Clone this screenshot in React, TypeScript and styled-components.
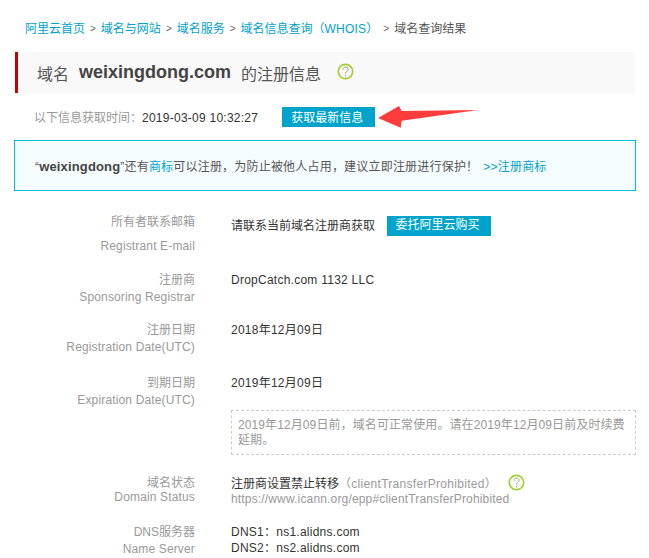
import styled, { createGlobalStyle } from 'styled-components';

const GlobalStyle = createGlobalStyle`
  html, body {
    margin: 0;
    padding: 0;
    background: #fff;
    overflow: hidden;
  }
  body {
    font-family: "Liberation Sans", "Noto Sans CJK SC", sans-serif;
    font-size: 12px;
    color: #333;
  }
`;

const Page = styled.div`
  width: 649px;
  height: 558px;
  overflow: hidden;
  padding: 21px 14px 0 14px;
  box-sizing: border-box;
`;

const Breadcrumb = styled.div`
  display: flex;
  align-items: center;
  height: 16px;
  padding-left: 11px;
  font-size: 12px;
  line-height: 16px;
  color: #555;
`;

const Crumb = styled.a`
  color: #00a2ca;
`;

const Whois = styled.span`
  letter-spacing: 0.2px;
`;

const Sep = styled.span`
  color: #666;
  margin: 0 5px;
  font-size: 10px;
`;

const TitleBar = styled.div`
  display: flex;
  align-items: center;
  height: 41px;
  margin: 15px 0 0 1px;
  padding-left: 19px;
  background: #f9f9f9;
  border-left: 3px solid #c40000;
  font-size: 16px;
  color: #555;
`;

const DomainName = styled.b`
  font-size: 18px;
  color: #444;
  margin: 0 10px;
`;

const Help = styled.svg<{ $gap: number }>`
  width: 17px;
  height: 17px;
  margin: -3px 0 0 ${p => p.$gap}px;
  flex: none;
`;

const FetchRow = styled.div`
  display: flex;
  align-items: center;
  height: 20px;
  margin-top: 14px;
  padding-left: 20px;
  color: #999;
`;

const FetchText = styled.span`
  margin-bottom: 2px;
`;

const FetchTime = styled.span`
  color: #333;
  letter-spacing: 0.25px;
`;

const FillButton = styled.button<{ $width: number; $left: number }>`
  width: ${p => p.$width}px;
  height: 20px;
  margin-left: ${p => p.$left}px;
  padding: 0 3px 2px 0;
  border: 0;
  background: #00a4ca;
  color: #fff;
  font: inherit;
  font-size: 12px;
  flex: none;
`;

const ArrowMark = styled.svg`
  width: 102px;
  height: 28px;
  margin-left: 2px;
  flex: none;
`;

const Notice = styled.div`
  display: flex;
  align-items: center;
  height: 51px;
  margin-top: 13px;
  padding-left: 20px;
  box-sizing: border-box;
  width: 622px;
  background: #f5fcff;
  border: 1px solid #00bfd8;
  color: #555;
  letter-spacing: 0.2px;
`;

const NoticeName = styled.b`
  font-size: 13px;
  letter-spacing: 0.15px;
  color: #444;
`;

const NoticeLink = styled.a<{ $left?: number }>`
  color: #00a2ca;
  margin-left: ${p => p.$left ?? 0}px;
`;

const Rows = styled.div`
  margin-top: 23px;
`;

const Row = styled.div<{ $height: number }>`
  display: grid;
  grid-template-columns: 181px 1fr;
  column-gap: 36px;
  height: ${p => p.$height}px;
`;

const Label = styled.div<{ $gap: number; $line?: number }>`
  display: flex;
  flex-direction: column;
  align-items: flex-end;
  gap: ${p => p.$gap}px;
  color: #999;
  line-height: ${p => p.$line ?? 16}px;
`;

const LabelEn = styled.span`
  letter-spacing: 0.15px;
`;

const Value = styled.div`
  line-height: 16px;
  color: #333;
  letter-spacing: 0.25px;
`;

const ValueLine = styled.div<{ $top?: number; $line?: number }>`
  display: flex;
  align-items: center;
  padding-top: ${p => p.$top ?? 0}px;
  height: ${p => p.$line ?? 15}px;
  letter-spacing: 0;
`;

const Muted = styled.span`
  color: #999;
  letter-spacing: 0.3px;
`;

const StatusLink = styled.span`
  color: #999;
  letter-spacing: 0.16px;
`;

const DashedNote = styled.div`
  box-sizing: border-box;
  width: 405px;
  height: 45px;
  margin: 0 0 21px 217px;
  padding: 7px 6px;
  border: 1px dashed #ccc;
  color: #999;
  line-height: 15px;
  letter-spacing: 0.1px;
`;

const HelpIcon = ({ gap }: { gap: number }) => (
  <Help $gap={gap} viewBox="0 0 17 17">
    <circle cx="8.5" cy="8.5" r="7.2" fill="none" stroke="#a6ce39" strokeWidth="1.7" />
    <path
      d="M6 6.6c0-1.6 1.1-2.5 2.6-2.5s2.5.9 2.5 2.2c0 1-.5 1.5-1.3 2.1-.8.6-1.2 1.1-1.2 2v.5"
      fill="none"
      stroke="#9aa86a"
      strokeWidth="1"
    />
    <circle cx="8.6" cy="12.8" r=".7" fill="#9aa86a" />
  </Help>
);

const Arrow = () => (
  <ArrowMark viewBox="0 0 102 28">
    <path d="M1 15 L22 3 L24.7 8 L101 7 L24.7 17.7 L23.7 24.7 Z" fill="#fd3c3c" />
  </ArrowMark>
);

export default function App() {
  return (
    <Page>
      <GlobalStyle />
      <Breadcrumb>
        <Crumb>阿里云首页</Crumb>
        <Sep>&gt;</Sep>
        <Crumb>域名与网站</Crumb>
        <Sep>&gt;</Sep>
        <Crumb>域名服务</Crumb>
        <Sep>&gt;</Sep>
        <Crumb>域名信息查询（<Whois>WHOIS</Whois>）</Crumb>
        <Sep>&gt;</Sep>
        <span>域名查询结果</span>
      </Breadcrumb>

      <TitleBar>
        域名
        <DomainName>weixingdong.com</DomainName>
        的注册信息
        <HelpIcon gap={16} />
      </TitleBar>

      <FetchRow>
        <FetchText>以下信息获取时间：<FetchTime>2019-03-09 10:32:27</FetchTime></FetchText>
        <FillButton $width={93} $left={24}>获取最新信息</FillButton>
        <Arrow />
      </FetchRow>

      <Notice>
        <span>“<NoticeName>weixingdong</NoticeName>”还有<NoticeLink>商标</NoticeLink>可以注册，为防止被他人占用，建议立即注册进行保护！</span>
        <NoticeLink $left={5}>&gt;&gt;注册商标</NoticeLink>
      </Notice>

      <Rows>
        <Row $height={58}>
          <Label $gap={8}>
            <span>所有者联系邮箱</span>
            <LabelEn>Registrant E-mail</LabelEn>
          </Label>
          <Value>
            <ValueLine $top={2} $line={20}>
              请联系当前域名注册商获取
              <FillButton $width={104} $left={12}>委托阿里云购买</FillButton>
            </ValueLine>
          </Value>
        </Row>
        <Row $height={50}>
          <Label $gap={1}>
            <span>注册商</span>
            <LabelEn>Sponsoring Registrar</LabelEn>
          </Label>
          <Value>DropCatch.com 1132 LLC</Value>
        </Row>
        <Row $height={53}>
          <Label $gap={1}>
            <span>注册日期</span>
            <LabelEn>Registration Date(UTC)</LabelEn>
          </Label>
          <Value>2018年12月09日</Value>
        </Row>
        <Row $height={35}>
          <Label $gap={1}>
            <span>到期日期</span>
            <LabelEn>Expiration Date(UTC)</LabelEn>
          </Label>
          <Value>2019年12月09日</Value>
        </Row>
        <DashedNote>2019年12月09日前，域名可正常使用。请在2019年12月09日前及时续费延期。</DashedNote>
        <Row $height={48}>
          <Label $gap={0} $line={14}>
            <span>域名状态</span>
            <LabelEn>Domain Status</LabelEn>
          </Label>
          <Value>
            <ValueLine>
              注册商设置禁止转移<Muted>（clientTransferProhibited）</Muted>
              <HelpIcon gap={11} />
            </ValueLine>
            <ValueLine><StatusLink>https://www.icann.org/epp#clientTransferProhibited</StatusLink></ValueLine>
          </Value>
        </Row>
        <Row $height={40}>
          <Label $gap={1}>
            <span>DNS服务器</span>
            <LabelEn>Name Server</LabelEn>
          </Label>
          <Value>
            <div>DNS1：ns1.alidns.com</div>
            <div>DNS2：ns2.alidns.com</div>
          </Value>
        </Row>
      </Rows>
    </Page>
  );
}
